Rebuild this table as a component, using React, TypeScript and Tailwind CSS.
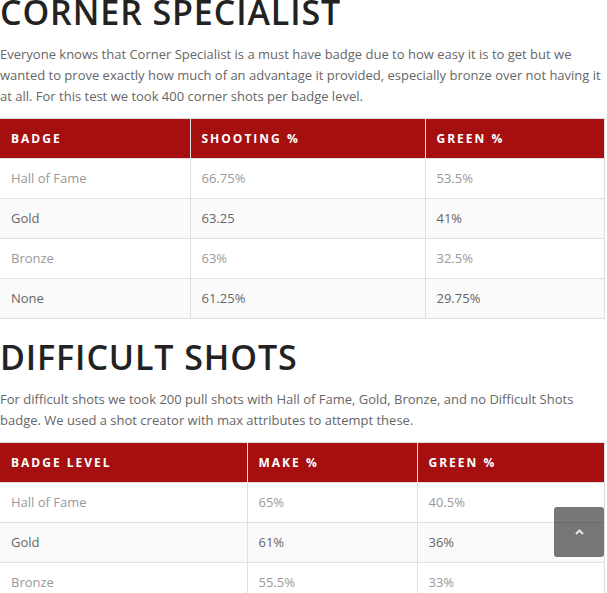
import React from "react";

const font = { fontFamily: '"Open Sans", "Noto Sans", sans-serif' };

type Row = [string, string, string];

function DataTable({ head, rows, widths }: { head: Row; rows: Row[]; widths: [string, string, string] }) {
  return (
    <table className="w-[604px] border-collapse table-fixed text-[13px]">
      <colgroup>
        <col className={widths[0]} />
        <col className={widths[1]} />
        <col className={widths[2]} />
      </colgroup>
      <thead>
        <tr className="bg-[#a50f10] h-[40px]">
          {head.map((h, i) => (
            <th
              key={i}
              className="border border-[#e0e0e0] border-l-0 text-left font-bold text-white text-[12px] tracking-[2px] uppercase pl-[11px] py-0"
            >
              {h}
            </th>
          ))}
        </tr>
      </thead>
      <tbody>
        {rows.map((r, ri) => (
          <tr key={ri} className={ri % 2 === 1 ? "bg-[#fafafa] h-[40px]" : "bg-white h-[40px]"}>
            {r.map((c, ci) => (
              <td
                key={ci}
                className={
                  "border border-[#e0e0e0] border-l-0 pl-[11px] py-0 " +
                  (ri % 2 === 1 ? "text-[#666]" : "text-[#999]")
                }
              >
                {c}
              </td>
            ))}
          </tr>
        ))}
      </tbody>
    </table>
  );
}

export default function App() {
  return (
    <div className="relative w-[607px] h-[593px] overflow-hidden bg-white" style={font}>
      <div className="w-[604px]">
        <h1 className="text-[34px] leading-[40px] tracking-[0.9px] text-[#222] font-semibold mt-[-8px] mb-0">
          CORNER SPECIALIST
        </h1>
        <p className="text-[13px] leading-[21px] text-[#666] mt-[12px] mb-[11px]">
          Everyone knows that Corner Specialist is a must have badge due to how easy it is to get but we wanted to
          prove exactly how much of an advantage it provided, especially bronze over not having it at all. For this
          test we took 400 corner shots per badge level.
        </p>
        <DataTable
          head={["Badge", "Shooting %", "Green %"]}
          widths={["w-[190px]", "w-[235px]", "w-[179px]"]}
          rows={[
            ["Hall of Fame", "66.75%", "53.5%"],
            ["Gold", "63.25", "41%"],
            ["Bronze", "63%", "32.5%"],
            ["None", "61.25%", "29.75%"],
          ]}
        />
        <h1 className="text-[34px] leading-[40px] tracking-[0.9px] text-[#222] font-semibold mt-[18px] mb-0">
          DIFFICULT SHOTS
        </h1>
        <p className="text-[13px] leading-[21px] text-[#666] mt-[12px] mb-[11px]">
          For difficult shots we took 200 pull shots with Hall of Fame, Gold, Bronze, and no Difficult Shots badge.
          We used a shot creator with max attributes to attempt these.
        </p>
        <DataTable
          head={["Badge Level", "Make %", "Green %"]}
          widths={["w-[247px]", "w-[170px]", "w-[187px]"]}
          rows={[
            ["Hall of Fame", "65%", "40.5%"],
            ["Gold", "61%", "36%"],
            ["Bronze", "55.5%", "33%"],
          ]}
        />
      </div>
      <div className="absolute left-[554px] top-[507px] w-[50px] h-[50px] rounded-[3px] bg-[rgba(0,0,0,0.53)] flex items-center justify-center">
        <svg width="9" height="6" viewBox="0 0 9 6">
          <polyline points="1,5 4.5,1.5 8,5" fill="none" stroke="#e5e5e5" strokeWidth="2" />
        </svg>
      </div>
    </div>
  );
}
